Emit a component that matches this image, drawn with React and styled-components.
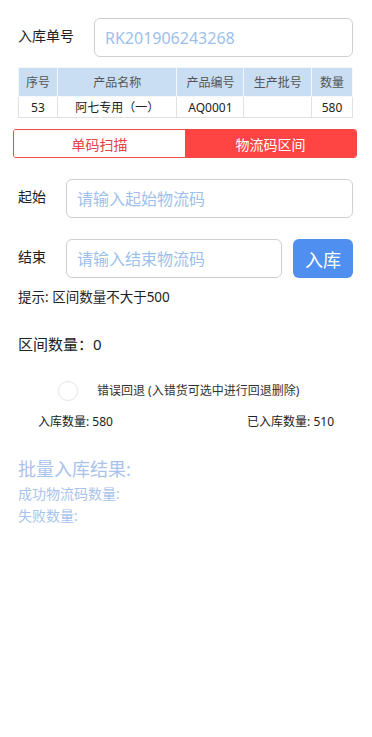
import React, { useState } from 'react';
import styled, { createGlobalStyle } from 'styled-components';

const GlobalStyle = createGlobalStyle`
  html, body {
    margin: 0;
    padding: 0;
    background: #fff;
  }
  body {
    font-family: "Noto Sans", "Noto Sans CJK SC", sans-serif;
    color: #222;
  }
  * { box-sizing: border-box; }
`;

const Page = styled.div`
  width: 372px;
  min-height: 737px;
  padding: 18px 19px 0 18px;
`;

const FieldRow = styled.div`
  display: flex;
  align-items: center;
  margin-top: ${p => p.$top || 0}px;
`;

const Label = styled.div`
  width: ${p => p.$w}px;
  flex-shrink: 0;
  font-size: 14px;
  line-height: 20px;
  color: #222;
  margin-top: ${p => p.$shift || 0}px;
`;

const TextInput = styled.input`
  flex: 1;
  min-width: 0;
  height: 39px;
  border: 1px solid #cfcfcf;
  border-radius: 6px;
  padding: 0 10px;
  font-family: inherit;
  font-size: 16px;
  color: #9dbfec;
  outline: none;
  &::placeholder { color: #9dbfec; }
`;

const Table = styled.table`
  width: 335px;
  margin-top: 10px;
  border-collapse: collapse;
  font-size: 12px;
  text-align: center;
  td, th {
    border: 1px solid #e1e1e1;
    padding: 0;
    font-weight: 400;
  }
  th {
    background: #c9ddf3;
    color: #555;
    height: 29px;
    border-color: #f4f7fb;
  }
  td {
    height: 21px;
    color: #222;
  }
`;

const Segment = styled.div`
  display: flex;
  margin: 11px -4px 0 -5px;
  height: 29px;
  border: 1px solid #f04848;
  border-radius: 3px;
  overflow: hidden;
`;

const SegItem = styled.div`
  flex: 1;
  display: flex;
  align-items: center;
  justify-content: center;
  font-size: 14px;
  background: ${p => (p.$active ? '#ff4444' : '#fff')};
  color: ${p => (p.$active ? '#fff' : '#e54545')};
`;

const SubmitButton = styled.button`
  width: 60px;
  height: 39px;
  margin-left: 11px;
  border: none;
  border-radius: 6px;
  background: #4f8ff0;
  color: #fff;
  font-family: inherit;
  font-size: 18px;
`;

const Hint = styled.div`
  margin-top: 10px;
  font-size: 13.5px;
  line-height: 18px;
`;

const Count = styled.div`
  margin-top: 26px;
  font-size: 15px;
  line-height: 24px;
`;

const RadioRow = styled.label`
  display: flex;
  align-items: center;
  margin: 25px 0 0 40px;
  font-size: 12px;
  line-height: 20px;
  color: #333;
`;

const Radio = styled.span`
  width: 20px;
  height: 20px;
  border-radius: 50%;
  border: 1px solid #e4e4e4;
  margin-right: 19px;
  flex-shrink: 0;
`;

const StatRow = styled.div`
  display: flex;
  justify-content: space-between;
  padding: 0 19px 0 20px;
  margin-top: 12px;
  font-size: 12px;
  line-height: 18px;
  color: #222;
`;

const ResultTitle = styled.div`
  margin-top: 26px;
  font-size: 18px;
  line-height: 24px;
  color: #a9c3ec;
`;

const ResultLine = styled.div`
  font-size: 14px;
  line-height: 22px;
  color: #a9c3ec;
  margin-top: ${p => p.$top || 0}px;
`;

const columns = ['序号', '产品名称', '产品编号', '生产批号', '数量'];
const widths = [39, 120, 67, 68, 41];
const rows = [['53', '阿七专用（一）', 'AQ0001', '', '580']];

export default function App() {
  const [mode, setMode] = useState(1);
  return (
    <>
      <GlobalStyle />
      <Page>
        <FieldRow>
          <Label $w={76} $shift={-4}>入库单号</Label>
          <TextInput defaultValue="RK201906243268" />
        </FieldRow>

        <Table>
          <thead>
            <tr>
              {columns.map((c, i) => (
                <th key={c} style={{ width: widths[i] }}>{c}</th>
              ))}
            </tr>
          </thead>
          <tbody>
            {rows.map((r, i) => (
              <tr key={i}>
                {r.map((v, j) => <td key={j}>{v}</td>)}
              </tr>
            ))}
          </tbody>
        </Table>

        <Segment>
          <SegItem $active={mode === 0} onClick={() => setMode(0)}>单码扫描</SegItem>
          <SegItem $active={mode === 1} onClick={() => setMode(1)}>物流码区间</SegItem>
        </Segment>

        <FieldRow $top={21}>
          <Label $w={48} $shift={-3}>起始</Label>
          <TextInput placeholder="请输入起始物流码" />
        </FieldRow>

        <FieldRow $top={21}>
          <Label $w={48} $shift={-3}>结束</Label>
          <TextInput placeholder="请输入结束物流码" />
          <SubmitButton>入库</SubmitButton>
        </FieldRow>

        <Hint>提示: 区间数量不大于500</Hint>
        <Count>区间数量：0</Count>

        <RadioRow>
          <Radio />
          错误回退 (入错货可选中进行回退删除)
        </RadioRow>

        <StatRow>
          <span>入库数量: 580</span>
          <span>已入库数量: 510</span>
        </StatRow>

        <ResultTitle>批量入库结果:</ResultTitle>
        <ResultLine $top={2}>成功物流码数量:</ResultLine>
        <ResultLine>失败数量:</ResultLine>
      </Page>
    </>
  );
}
